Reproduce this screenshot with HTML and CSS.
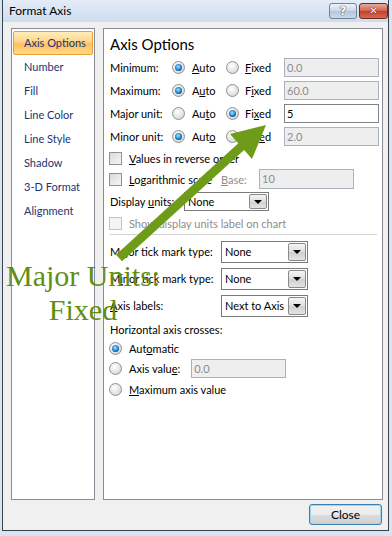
FILE: index.html
```html
<!DOCTYPE html>
<html lang="en">
<head>
    <meta charset="UTF-8">
    <title>Format Axis</title>
    <link rel="stylesheet" href="styles.css">
</head>
<body>
    <div class="window">
        <div class="titlebar">
            <span class="title">Format Axis</span>
            <div class="caption">
                <span class="cap help">?</span>
                <span class="cap close">&#x2715;</span>
            </div>
        </div>

        <div class="main">
            <ul class="nav">
                <li class="active">Axis Options</li>
                <li>Number</li>
                <li>Fill</li>
                <li>Line Color</li>
                <li>Line Style</li>
                <li>Shadow</li>
                <li>3-D Format</li>
                <li>Alignment</li>
            </ul>

            <div class="panel">
                <h2>Axis Options</h2>

                <div class="opt-row">
                    <span>Minimum:</span>
                    <span class="radio on"></span><span class="opt"><u>A</u>uto</span>
                    <span class="radio"></span><span class="opt"><u>F</u>ixed</span>
                    <span class="field off">0.0</span>
                </div>
                <div class="opt-row">
                    <span>Maximum:</span>
                    <span class="radio on"></span><span class="opt">A<u>u</u>to</span>
                    <span class="radio"></span><span class="opt">F<u>i</u>xed</span>
                    <span class="field off">60.0</span>
                </div>
                <div class="opt-row">
                    <span>Major unit:</span>
                    <span class="radio"></span><span class="opt">Au<u>t</u>o</span>
                    <span class="radio on"></span><span class="opt">Fi<u>x</u>ed</span>
                    <span class="field">5</span>
                </div>
                <div class="opt-row">
                    <span>Minor unit:</span>
                    <span class="radio on"></span><span class="opt">Aut<u>o</u></span>
                    <span class="radio"></span><span class="opt">Fix<u>e</u>d</span>
                    <span class="field off">2.0</span>
                </div>

                <div class="check-row values">
                    <span class="check"></span><span><u>V</u>alues in reverse order</span>
                </div>
                <div class="check-row log">
                    <span class="check"></span><span><u>L</u>ogarithmic scale</span>
                    <span class="muted"><u>B</u>ase:</span>
                    <span class="field off">10</span>
                </div>
                <div class="units-row">
                    <span>Display <u>u</u>nits:</span>
                    <span class="combo small">None<i class="drop"></i></span>
                </div>
                <div class="check-row show">
                    <span class="check off"></span><span class="muted">Sho<u>w</u> display units label on chart</span>
                </div>

                <div class="sep"></div>

                <div class="tick-row">
                    <span>Ma<u>j</u>or tick mark type:</span>
                    <span class="combo">None<i class="drop"></i></span>
                </div>
                <div class="tick-row">
                    <span>M<u>i</u>nor tick mark type:</span>
                    <span class="combo">None<i class="drop"></i></span>
                </div>
                <div class="tick-row">
                    <span><u>A</u>xis labels:</span>
                    <span class="combo">Next to Axis<i class="drop"></i></span>
                </div>

                <div class="cross-title">Horizontal axis crosses:</div>
                <div class="cross-row auto">
                    <span class="radio on"></span><span>Aut<u>o</u>matic</span>
                </div>
                <div class="cross-row value">
                    <span class="radio"></span><span>Axis valu<u>e</u>:</span>
                    <span class="field off">0.0</span>
                </div>
                <div class="cross-row max">
                    <span class="radio"></span><span><u>M</u>aximum axis value</span>
                </div>
            </div>
        </div>

        <div class="footer">
            <button class="btn">Close</button>
        </div>

        <svg class="arrow" width="392" height="536" viewBox="0 0 392 536">
            <line x1="118" y1="258" x2="242" y2="145" stroke="#6e9c18" stroke-width="9"/>
            <polygon points="265,125 229,134 251,159" fill="#6e9c18"/>
        </svg>
        <div class="callout">Major Units:<br>Fixed</div>
    </div>
</body>
</html>
```

FILE: styles.css
```css
body {
    margin: 0;
    background: #d9e4f1;
    font-family: "Segoe UI", Lato, "Liberation Sans", sans-serif;
    font-size: 11px;
    color: #000;
    white-space: nowrap;
}
.window {
    position: relative;
    width: 385px;
    height: 530px;
    margin-left: 2px;
    border: 1px solid #3a434d;
    border-top: none;
    background: #f0f0f0;
}
.titlebar {
    height: 22px;
    display: flex;
    justify-content: space-between;
    background: linear-gradient(#e4edf7, #cddcee);
}
.title {
    padding-left: 6px;
    line-height: 22px;
    font-size: 12px;
}
.caption {
    display: flex;
    gap: 2px;
    margin-top: 3px;
}
.cap {
    height: 14px;
    border-radius: 3px;
    color: #fff;
    font-weight: bold;
    text-align: center;
    line-height: 14px;
    font-family: "DejaVu Sans", sans-serif;
}
.help {
    width: 26px;
    border: 1px solid #6f8399;
    background: linear-gradient(#eef3f9, #c9d7e7 50%, #b3c6dc 51%, #cbd9e9);
    font-size: 12px;
    text-shadow: 0 0 1px #333, 0 0 1px #333;
}
.close {
    width: 27px;
    border: 1px solid #6b2a22;
    background: linear-gradient(#e9aa9c, #d3604b 50%, #c1402c 51%, #d66a52);
    font-size: 10px;
    text-shadow: 0 0 1px #5a1a12, 0 0 1px #5a1a12;
}
.main {
    display: flex;
    gap: 8px;
    padding: 6px 5px 0 8px;
    height: 472px;
}
.nav {
    list-style: none;
    margin: 0;
    padding: 1px 1px;
    width: 80px;
    background: #fff;
    border: 1px solid #898c95;
}
.nav li {
    height: 24px;
    line-height: 24px;
    padding-left: 11px;
    color: #1b3470;
}
.nav li.active {
    height: 22px;
    line-height: 22px;
    margin: 1px 0 0;
    padding-left: 10px;
    border: 1px solid #e6a13a;
    border-radius: 2px;
    background: linear-gradient(#ffeebb, #ffd48a 45%, #ffc15a 55%, #ffd88c);
}
.panel {
    flex: 1;
    background: #fff;
    border: 1px solid #898c95;
    padding-left: 6px;
}
.panel h2 {
    margin: 0;
    height: 27px;
    line-height: 31px;
    font-size: 15px;
    font-weight: normal;
}
.opt-row {
    display: grid;
    grid-template-columns: 62px 13px 41px 13px 45px 95px;
    align-items: center;
    height: 23px;
}
.opt {
    padding-left: 7px;
}
.opt-row .opt:nth-of-type(5) {
    padding-left: 6px;
}
.radio {
    position: relative;
    width: 13px;
    height: 13px;
    box-sizing: border-box;
    border-radius: 50%;
    border: 1px solid #8f9193;
    background: radial-gradient(circle at 40% 35%, #fff, #e2e2e2 60%, #c4c4c4);
}
.radio.on::after {
    content: "";
    position: absolute;
    left: 2px;
    top: 2px;
    width: 7px;
    height: 7px;
    border-radius: 50%;
    background: radial-gradient(circle at 45% 40%, #a8e6ff, #2a94d6 45%, #0d3f7a 80%);
}
.field {
    height: 19px;
    box-sizing: border-box;
    line-height: 17px;
    padding-left: 2px;
    border: 1px solid #7f848a;
    background: #fff;
}
.field.off {
    border-color: #aab3bd;
    background: #eeeeee;
    color: #8c8c8c;
}
.check-row {
    display: flex;
    align-items: center;
    gap: 7px;
    height: 20px;
    margin-left: -1px;
}
.check {
    width: 13px;
    height: 13px;
    box-sizing: border-box;
    border: 1px solid #8f9193;
    background: linear-gradient(135deg, #dadada, #f6f6f6);
}
.check.off {
    border-color: #c4c4c4;
    background: #f4f4f4;
}
.muted {
    color: #8d8d8d;
}
.log {
    display: grid;
    grid-template-columns: 20px 92px 38px 95px;
    gap: 0;
    height: 22px;
}
.log .field {
    height: 20px;
}
.units-row {
    display: grid;
    grid-template-columns: 74px 85px;
    align-items: center;
    height: 23px;
}
.combo {
    position: relative;
    height: 22px;
    box-sizing: border-box;
    line-height: 20px;
    padding-left: 3px;
    border: 1px solid #7a7a7a;
    background: #fff;
}
.combo.small {
    height: 19px;
    line-height: 17px;
}
.drop {
    position: absolute;
    right: 1px;
    top: 1px;
    bottom: 1px;
    width: 16px;
    border: 1px solid #8a8a8a;
    border-radius: 2px;
    background: linear-gradient(#f5f5f5, #dedede 50%, #cfcfcf 51%, #e4e4e4);
}
.drop::after {
    content: "";
    position: absolute;
    left: 4px;
    top: 50%;
    margin-top: -2px;
    border-left: 4px solid transparent;
    border-right: 4px solid transparent;
    border-top: 4px solid #000;
}
.sep {
    height: 1px;
    margin: 1px 5px 3px 0;
    background: #d2d2d2;
}
.tick-row {
    display: grid;
    grid-template-columns: 111px 87px;
    align-items: center;
    height: 27px;
}
.cross-title {
    height: 22px;
    line-height: 22px;
}
.cross-row {
    display: flex;
    align-items: center;
    gap: 7px;
    margin-left: -1px;
}
.cross-row.auto {
    height: 14px;
}
.cross-row.value {
    height: 26px;
}
.cross-row.value .field {
    width: 95px;
    margin-left: 4px;
}
.cross-row.max {
    height: 17px;
}
.footer {
    display: flex;
    justify-content: flex-end;
    padding: 4px 6px 0 0;
}
.btn {
    width: 73px;
    height: 21px;
    font-family: inherit;
    font-size: 12px;
    border: 1px solid #3c7fb1;
    border-radius: 3px;
    background: linear-gradient(#f2f2f2, #ebebeb 50%, #dddddd 51%, #cfcfcf);
    box-shadow: inset 0 0 0 1px #9fd6f4;
}
.arrow {
    position: absolute;
    left: -2px;
    top: 0;
}
.callout {
    position: absolute;
    left: 3px;
    top: 259px;
    width: 154px;
    text-align: center;
    font-family: "Liberation Serif", serif;
    font-size: 30px;
    line-height: 34px;
    color: #5f8f0f;
}
```
